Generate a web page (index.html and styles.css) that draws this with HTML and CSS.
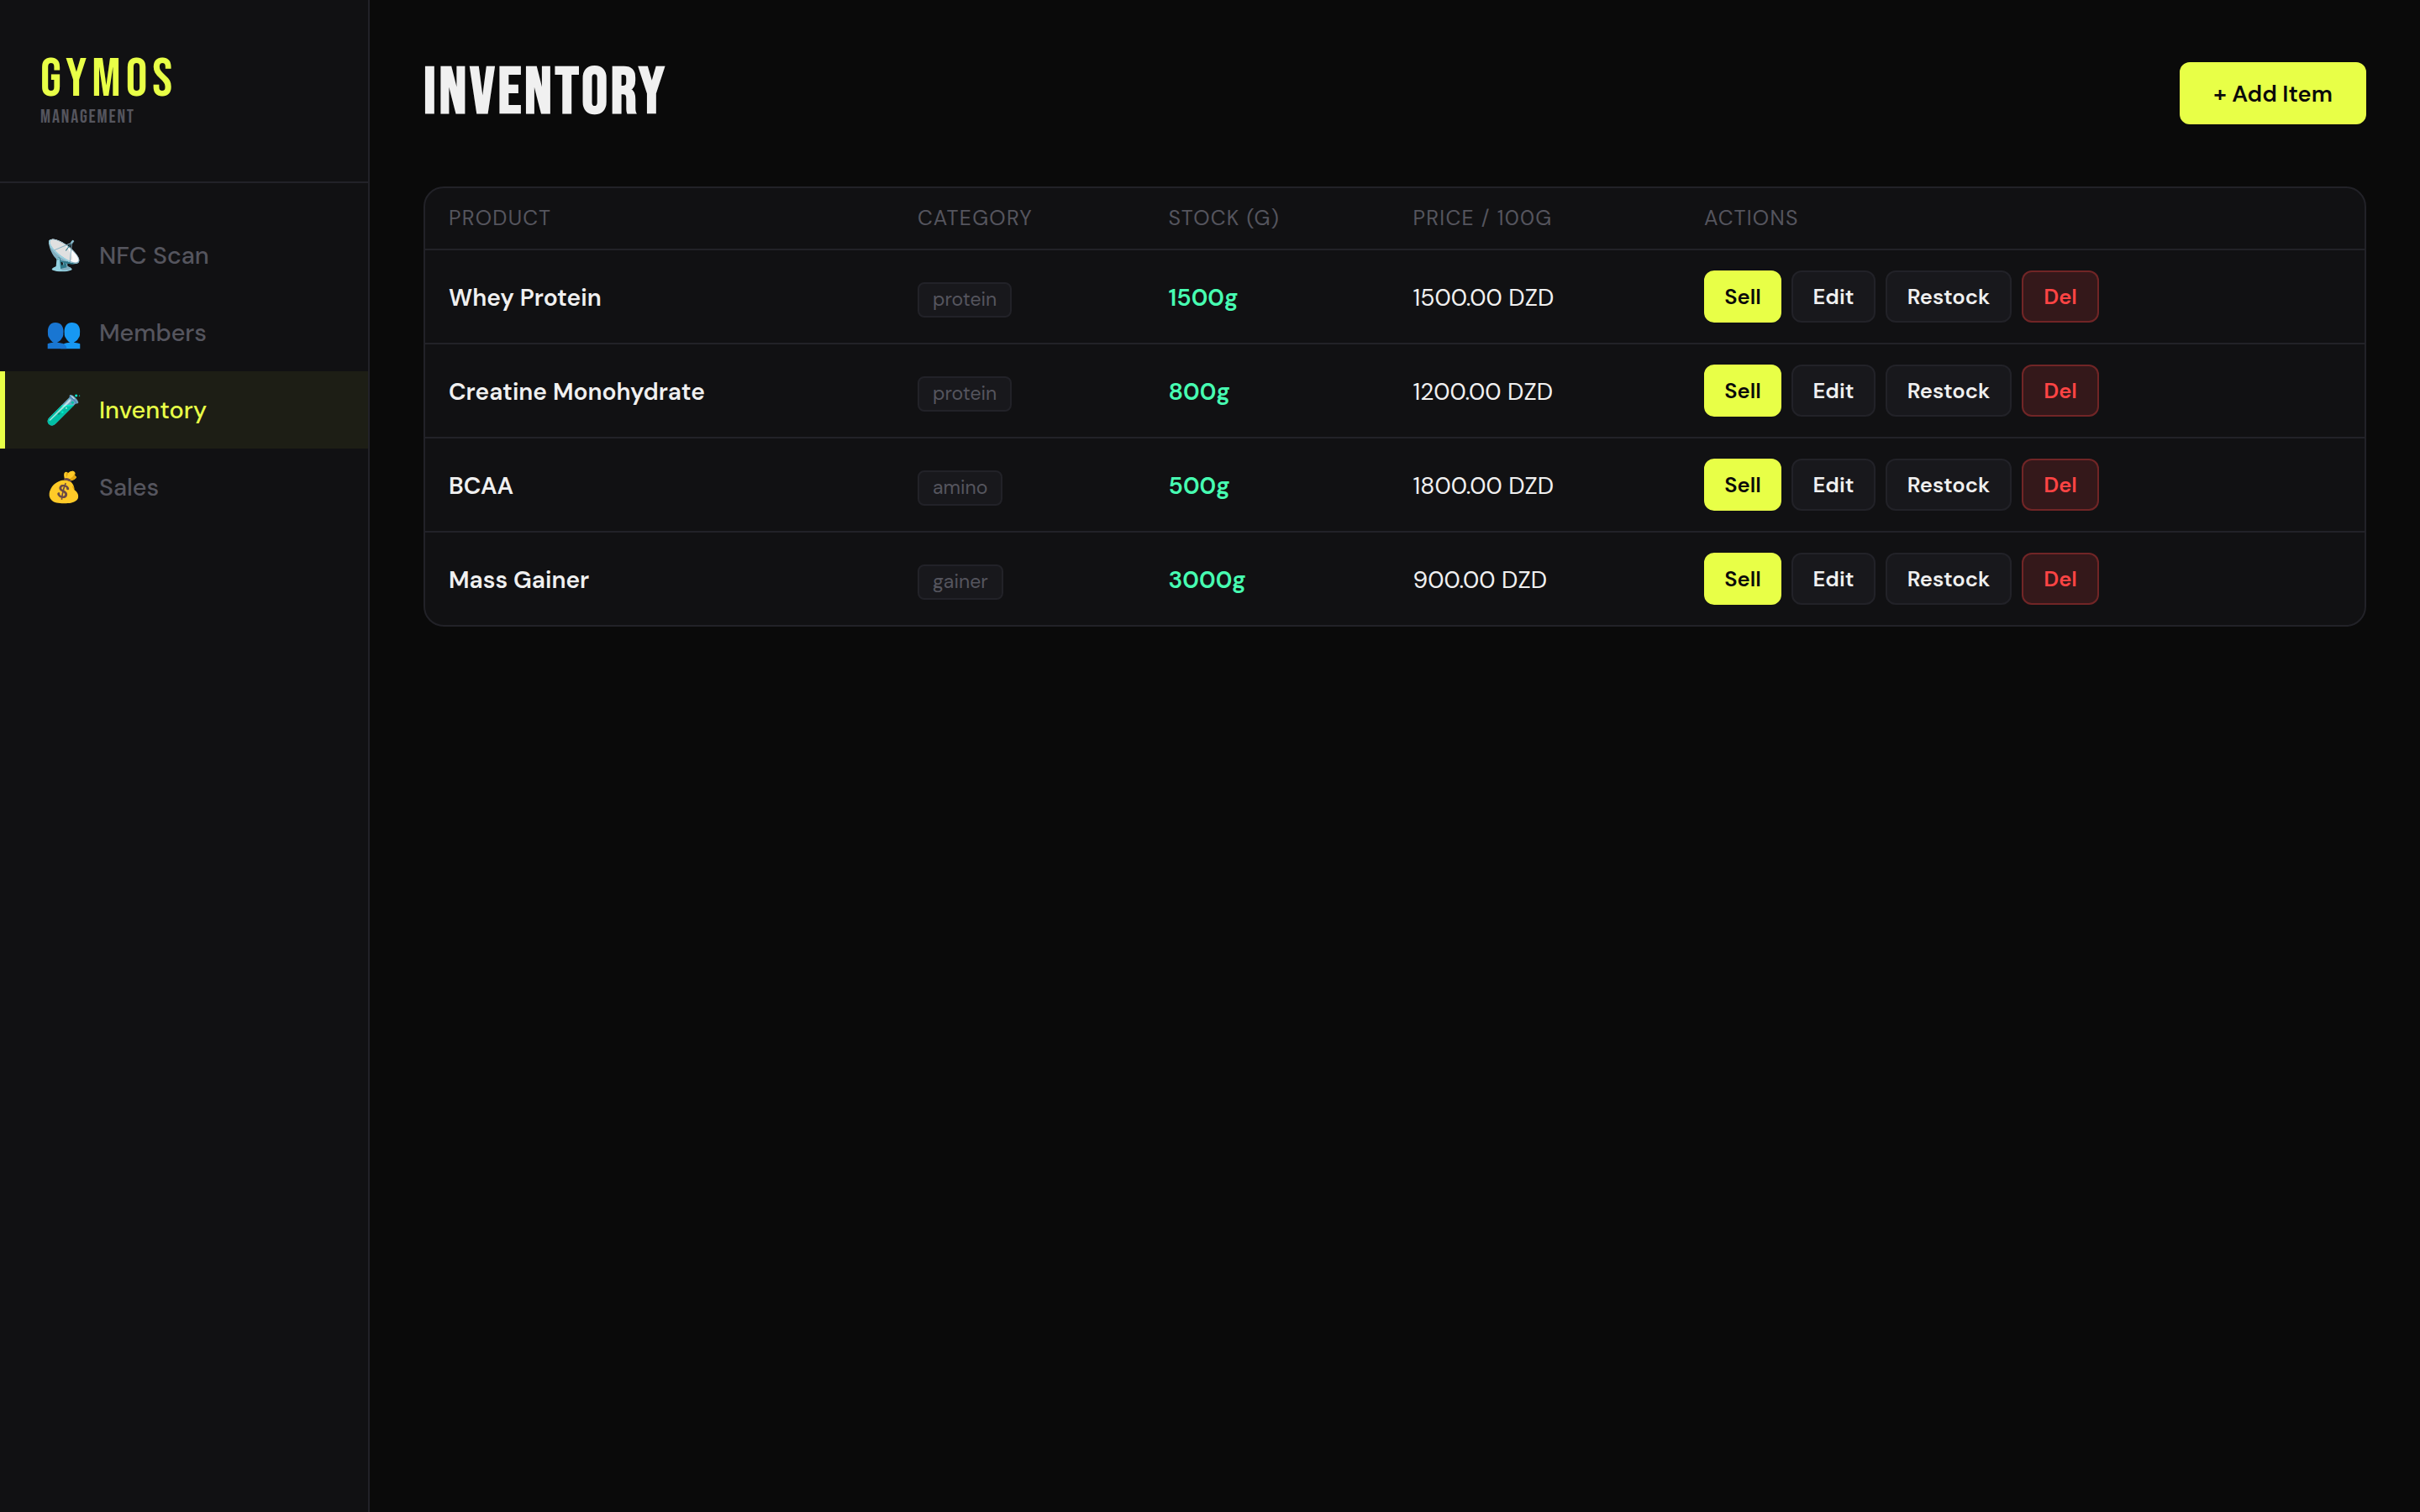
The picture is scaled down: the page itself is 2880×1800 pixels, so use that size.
FILE: index.html
```html
<!DOCTYPE html>
<html lang="en">
<head>
<meta charset="utf-8">
<title>GymOS – Inventory</title>
<link rel="stylesheet" href="styles.css">
</head>
<body>
<div class="app">
  <aside class="sidebar">
    <div class="brand">
      <div class="brand-name">GYMOS</div>
      <div class="brand-sub">MANAGEMENT</div>
    </div>
    <nav class="nav">
      <a class="nav-item"><span class="nav-icon">📡</span><span>NFC Scan</span></a>
      <a class="nav-item"><span class="nav-icon">👥</span><span>Members</span></a>
      <a class="nav-item active"><span class="nav-icon">🧪</span><span>Inventory</span></a>
      <a class="nav-item"><span class="nav-icon">💰</span><span>Sales</span></a>
    </nav>
  </aside>
  <main class="main">
    <header class="page-header">
      <h1 class="page-title">INVENTORY</h1>
      <button class="btn btn-add btn-primary">+ Add Item</button>
    </header>
    <div class="card">
      <table class="table">
        <colgroup><col class="col-product"><col class="col-category"><col class="col-stock"><col class="col-price"><col></colgroup>
        <thead>
          <tr><th>PRODUCT</th><th>CATEGORY</th><th>STOCK (G)</th><th>PRICE / 100G</th><th>ACTIONS</th></tr>
        </thead>
        <tbody>
          <tr>
            <td class="name">Whey Protein</td><td><span class="badge">protein</span></td><td class="stock">1500g</td><td>1500.00 DZD</td>
            <td class="actions"><div class="btn-row"><button class="btn btn-sm btn-primary">Sell</button><button class="btn btn-sm btn-ghost">Edit</button><button class="btn btn-sm btn-ghost wide">Restock</button><button class="btn btn-sm btn-danger">Del</button></div></td>
          </tr>
          <tr>
            <td class="name">Creatine Monohydrate</td><td><span class="badge">protein</span></td><td class="stock">800g</td><td>1200.00 DZD</td>
            <td class="actions"><div class="btn-row"><button class="btn btn-sm btn-primary">Sell</button><button class="btn btn-sm btn-ghost">Edit</button><button class="btn btn-sm btn-ghost wide">Restock</button><button class="btn btn-sm btn-danger">Del</button></div></td>
          </tr>
          <tr>
            <td class="name">BCAA</td><td><span class="badge">amino</span></td><td class="stock">500g</td><td>1800.00 DZD</td>
            <td class="actions"><div class="btn-row"><button class="btn btn-sm btn-primary">Sell</button><button class="btn btn-sm btn-ghost">Edit</button><button class="btn btn-sm btn-ghost wide">Restock</button><button class="btn btn-sm btn-danger">Del</button></div></td>
          </tr>
          <tr>
            <td class="name">Mass Gainer</td><td><span class="badge">gainer</span></td><td class="stock">3000g</td><td>900.00 DZD</td>
            <td class="actions"><div class="btn-row"><button class="btn btn-sm btn-primary">Sell</button><button class="btn btn-sm btn-ghost">Edit</button><button class="btn btn-sm btn-ghost wide">Restock</button><button class="btn btn-sm btn-danger">Del</button></div></td>
          </tr>
        </tbody>
      </table>
    </div>
  </main>
</div>
</body>
</html>
```
FILE: styles.css
```css
:root {
  --bg: #0a0a0a;
  --panel: #111113;
  --raised: #18181c;
  --line: #222228;
  --text: #f0f0f0;
  --muted: #55555e;
  --lime: #e8ff47;
  --green: #47ffb2;
  --red: #ff4444;
}

* { box-sizing: border-box; margin: 0; padding: 0; }

body {
  background: var(--bg);
  color: var(--text);
  font-family: "DM Sans", Inter, sans-serif;
  font-size: 28.16px;
}

.app { display: flex; min-height: 1800px; }

/* Sidebar */
.sidebar {
  width: 440px;
  flex: none;
  background: var(--panel);
  border-right: 2px solid var(--line);
}

.brand {
  height: 218px;
  padding: 63px 48px 0;
  border-bottom: 2px solid var(--line);
  font-family: "Bebas Neue", "Roboto Condensed", sans-serif;
}

.brand-name { font-size: 64px; line-height: 64px; letter-spacing: 6px; color: var(--lime); }
.brand-sub { font-size: 22.4px; line-height: 26px; letter-spacing: 1.85px; color: var(--muted); }

.nav { display: flex; flex-direction: column; padding-top: 40px; }

.nav-item {
  display: flex;
  align-items: center;
  gap: 20px;
  height: 92px;
  padding-left: 48px;
  border-left: 6px solid transparent;
  color: var(--muted);
  font-size: 28.8px;
  font-weight: 500;
}

.nav-item.active {
  color: var(--lime);
  background: rgba(232, 255, 71, 0.055);
  border-left-color: var(--lime);
}

.nav-icon {
  display: flex;
  justify-content: center;
  width: 44px;
  font-size: 35.2px;
  line-height: 42px;
}

/* Main column */
.main { flex: 1; padding: 64px; }

.page-header {
  display: flex;
  justify-content: space-between;
  align-items: center;
  height: 94px;
  margin-bottom: 64px;
}

.page-title {
  font-family: "Bebas Neue", "Roboto Condensed", sans-serif;
  font-size: 76.8px;
  font-weight: 700;
  line-height: 94px;
  letter-spacing: 3.84px;
}

/* Buttons */
.btn {
  display: flex;
  align-items: center;
  justify-content: center;
  border: 2px solid transparent;
  border-radius: 12px;
  font-family: inherit;
  font-weight: 600;
}

.btn-add { width: 222px; height: 74px; font-size: 27.2px; }
.btn-sm { width: 92px; height: 62px; font-size: 25.6px; }
.btn-primary { background: var(--lime); border-color: var(--lime); color: #0a0a0a; }
.btn-ghost { width: 100px; background: var(--raised); border-color: var(--line); color: var(--text); }
.btn-ghost.wide { width: 150px; }
.btn-danger { background: rgba(255, 68, 68, 0.15); border-color: rgba(255, 68, 68, 0.3); color: var(--red); }
.btn-row { display: flex; gap: 12px; }

/* Inventory table */
.card {
  background: var(--panel);
  border: 2px solid var(--line);
  border-radius: 24px;
  overflow: hidden;
}

.table { width: 100%; table-layout: fixed; border-collapse: separate; border-spacing: 0; }
.col-product { width: 558px; }
.col-category { width: 298.5px; }
.col-stock { width: 291px; }
.col-price { width: 346.5px; }

th {
  height: 74px;
  padding: 0 28px 1px;
  border-bottom: 2px solid var(--line);
  color: var(--muted);
  font-size: 24.96px;
  font-weight: 400;
  letter-spacing: 1.248px;
  text-align: left;
}

td {
  height: 112px;
  padding: 2px 28px 0;
  border-bottom: 2px solid var(--line);
  vertical-align: middle;
}

tr:last-child td { height: 110px; border-bottom: 0; }

.name { font-weight: 600; }
.stock { font-weight: 600; color: var(--green); }
.actions { padding-top: 0; }

.badge {
  display: block;
  width: fit-content;
  height: 42px;
  margin-top: 6px;
  padding: 0 16px;
  border: 2px solid var(--line);
  border-radius: 8px;
  background: var(--raised);
  color: var(--muted);
  font-size: 23.04px;
  line-height: 36px;
}
```
